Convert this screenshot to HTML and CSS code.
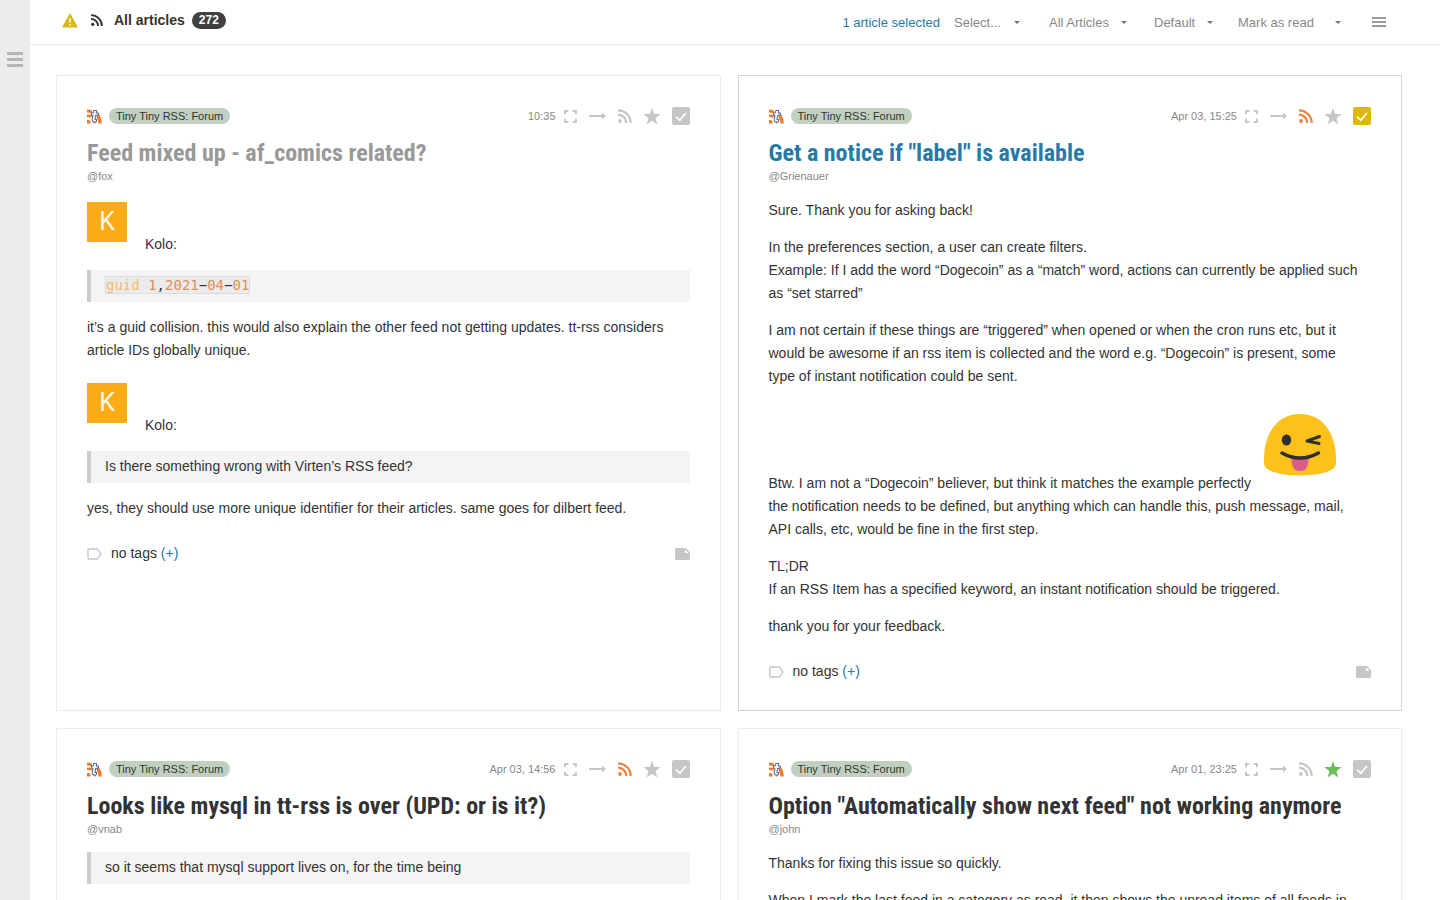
FILE: index.html
```html
<!DOCTYPE html>
<html lang="en">
<head>
<meta charset="utf-8">
<title>Tiny Tiny RSS</title>
<link rel="stylesheet" href="styles.css">
</head>
<body>
<svg class="defs" width="0" height="0" aria-hidden="true">
  <symbol id="rss" viewBox="0 0 14 14"><circle cx="2" cy="12" r="1.9"/><path d="M0 5.7A8.3 8.3 0 0 1 8.3 14M0 1.3A12.7 12.7 0 0 1 12.7 14" fill="none" stroke="currentColor" stroke-width="2.2"/></symbol>
  <symbol id="expand" viewBox="0 0 12 12"><path d="M1 4V1H4M8 1H11V4M11 8V11H8M4 11H1V8" fill="none" stroke="currentColor" stroke-width="1.8"/></symbol>
  <symbol id="arrow" viewBox="0 0 17 8"><path d="M0 3.1H13V0.4L17 4L13 7.6V4.9H0Z"/></symbol>
  <symbol id="star" viewBox="0 0 18 17"><path d="M9 0L11.1 6H17.5L12.5 10.2L14.4 16.6L9 12.8L3.6 16.6L5.5 10.2L0.5 6H6.9Z"/></symbol>
  <symbol id="label" viewBox="0 0 15 12"><path d="M2 1H9.6Q10.4 1 10.9 1.7L14 6L10.9 10.3Q10.4 11 9.6 11H2Q1 11 1 10V2Q1 1 2 1Z" fill="none" stroke="currentColor" stroke-width="1.4"/></symbol>
  <symbol id="note" viewBox="0 0 15 12"><path fill-rule="evenodd" d="M1.5 0H10.8L15 4.2V10.5Q15 12 13.5 12H1.5Q0 12 0 10.5V1.5Q0 0 1.5 0ZM9.8 1.2V5H13.8Z"/></symbol>
  <symbol id="favicon" viewBox="0 0 15 15"><path d="M0 0.5Q3 0.5 5 1.500V4.500Q3 3.500 0 3.500ZM0 5.500Q3 5.500 4.500 6.500V9Q3 8 0 8ZM0 11Q2 10.500 3.500 12V14.500H0ZM10.500 3.500Q14.800 8 14.800 14.500H11.500Q11.500 11 9.500 8.500ZM5.500 11.500H8.500V14.500H7Z" fill="#ee7b2d"/><path d="M6.800 1.500H9.800L9.200 4H11.500L11 6.300H8.600L7.900 10.500H9.800L9.300 13H7Q4.800 13 5.200 10.500L6 6.300H4L4.500 4H6.200Z" fill="#fff" stroke="#4a5d8c" stroke-width="1"/></symbol>
</svg>

<div class="app">
  <aside class="sidebar">
    <button class="burger" aria-label="Toggle sidebar"><i></i><i></i><i></i></button>
  </aside>
  <div class="main">
    <header class="toolbar">
      <div class="feed-name">
        <svg class="warn" viewBox="0 0 16 15"><path d="M8 0L16 14.5H0Z" fill="#dbb714"/><path d="M8 5.2V9.6M8 11V12.6" stroke="#fff" stroke-width="1.6"/></svg>
        <svg class="head-rss"><use href="#rss"/></svg>
        <span class="feed-title">All articles</span>
        <span class="badge">272</span>
      </div>
      <div class="actions">
        <a href="#" class="selected">1 article selected</a>
        <button class="menu menu-select">Select...<i class="caret"></i></button>
        <label class="menu menu-view"><select aria-label="View mode"><option>All Articles</option><option>Unread</option></select><i class="caret"></i></label>
        <label class="menu menu-order"><select aria-label="Sort order"><option>Default</option><option>Title</option></select><i class="caret"></i></label>
        <button class="menu menu-mark">Mark as read<i class="caret"></i></button>
        <button class="more" aria-label="Actions"><i></i><i></i><i></i></button>
      </div>
    </header>

    <main class="articles">
      <article class="card read">
        <div class="meta">
          <svg class="favicon"><use href="#favicon"/></svg>
          <a href="#" class="feed">Tiny Tiny RSS: Forum</a>
          <time>10:35</time>
          <svg class="expand"><use href="#expand"/></svg>
          <svg class="arrow"><use href="#arrow"/></svg>
          <svg class="rss"><use href="#rss"/></svg>
          <svg class="star"><use href="#star"/></svg>
          <input type="checkbox" aria-label="Select article">
        </div>
        <h2><a href="#">Feed mixed up - af_comics related?</a></h2>
        <div class="author">@fox</div>
        <div class="content">
          <div class="user"><span class="avatar">K</span>Kolo:</div>
          <blockquote><code><b class="kw">guid</b> <b class="num">1</b>,<b class="num">2021</b>−<b class="num">04</b>−<b class="num">01</b></code></blockquote>
          <p>it’s a guid collision. this would also explain the other feed not getting updates. tt-rss considers article IDs globally unique.</p>
          <div class="user"><span class="avatar">K</span>Kolo:</div>
          <blockquote>Is there something wrong with Virten’s RSS feed?</blockquote>
          <p>yes, they should use more unique identifier for their articles. same goes for dilbert feed.</p>
        </div>
        <footer><svg class="label"><use href="#label"/></svg><span>no tags <a href="#">(+)</a></span><svg class="note"><use href="#note"/></svg></footer>
      </article>

      <article class="card active">
        <div class="meta">
          <svg class="favicon"><use href="#favicon"/></svg>
          <a href="#" class="feed">Tiny Tiny RSS: Forum</a>
          <time>Apr 03, 15:25</time>
          <svg class="expand"><use href="#expand"/></svg>
          <svg class="arrow"><use href="#arrow"/></svg>
          <svg class="rss unread"><use href="#rss"/></svg>
          <svg class="star"><use href="#star"/></svg>
          <input type="checkbox" aria-label="Select article" checked>
        </div>
        <h2><a href="#">Get a notice if "label" is available</a></h2>
        <div class="author">@Grienauer</div>
        <div class="content">
          <p>Sure. Thank you for asking back!</p>
          <p>In the preferences section, a user can create filters.<br>Example: If I add the word “Dogecoin” as a “match” word, actions can currently be applied such as “set starred”</p>
          <p>I am not certain if these things are “triggered” when opened or when the cron runs etc, but it would be awesome if an rss item is collected and the word e.g. “Dogecoin” is present, some<br>type of instant notification could be sent.</p>
          <p>Btw. I am not a “Dogecoin” believer, but think it matches the example perfectly<svg class="emoji" viewBox="0 0 80 86" role="img" aria-label="winking face with tongue"><path d="M40 12C20 12 9 26 5 45C4 52 3.500 60 4.500 64C8 70 22 73.500 40 73.500S72 70 75.500 64C76.500 60 76 52 75 45C71 26 60 12 40 12Z" fill="#fcc21b"/><ellipse cx="26.500" cy="38" rx="4.700" ry="5.500" fill="#2f2f2f"/><path d="M59.500 34.500L47 39L59 41.500" fill="none" stroke="#2f2f2f" stroke-width="3" stroke-linecap="round" stroke-linejoin="round"/><path d="M31.500 55H48.500V59Q48 69 40 69T31.500 59Z" fill="#db5b8d"/><path d="M22 51Q40 61 58.500 51" fill="none" stroke="#2f2f2f" stroke-width="3.500" stroke-linecap="round"/></svg><br>the notification needs to be defined, but anything which can handle this, push message, mail,<br>API calls, etc, would be fine in the first step.</p>
          <p>TL;DR<br>If an RSS Item has a specified keyword, an instant notification should be triggered.</p>
          <p>thank you for your feedback.</p>
        </div>
        <footer><svg class="label"><use href="#label"/></svg><span>no tags <a href="#">(+)</a></span><svg class="note"><use href="#note"/></svg></footer>
      </article>

      <article class="card">
        <div class="meta">
          <svg class="favicon"><use href="#favicon"/></svg>
          <a href="#" class="feed">Tiny Tiny RSS: Forum</a>
          <time>Apr 03, 14:56</time>
          <svg class="expand"><use href="#expand"/></svg>
          <svg class="arrow"><use href="#arrow"/></svg>
          <svg class="rss unread"><use href="#rss"/></svg>
          <svg class="star"><use href="#star"/></svg>
          <input type="checkbox" aria-label="Select article">
        </div>
        <h2><a href="#">Looks like mysql in tt-rss is over (UPD: or is it?)</a></h2>
        <div class="author">@vnab</div>
        <div class="content">
          <blockquote>so it seems that mysql support lives on, for the time being</blockquote>
        </div>
      </article>

      <article class="card">
        <div class="meta">
          <svg class="favicon"><use href="#favicon"/></svg>
          <a href="#" class="feed">Tiny Tiny RSS: Forum</a>
          <time>Apr 01, 23:25</time>
          <svg class="expand"><use href="#expand"/></svg>
          <svg class="arrow"><use href="#arrow"/></svg>
          <svg class="rss"><use href="#rss"/></svg>
          <svg class="star starred"><use href="#star"/></svg>
          <input type="checkbox" aria-label="Select article">
        </div>
        <h2><a href="#">Option "Automatically show next feed" not working anymore</a></h2>
        <div class="author">@john</div>
        <div class="content">
          <p>Thanks for fixing this issue so quickly.</p>
          <p>When I mark the last feed in a category as read, it then shows the unread items of all feeds in</p>
        </div>
      </article>
    </main>
  </div>
</div>
</body>
</html>
```
FILE: styles.css
```css
* { box-sizing: border-box; }
body {
  margin: 0;
  font: 14px/23px "Liberation Sans", Arial, sans-serif;
  color: #333;
  background: #fff;
}
a { color: #257aa7; text-decoration: none; }
button { border: 0; padding: 0; background: none; font: inherit; color: inherit; }
svg { fill: currentColor; flex: none; }
.defs { position: absolute; }

.app { display: flex; height: 100vh; overflow: hidden; }
.sidebar { flex: none; width: 30px; background: #ececec; padding: 52px 7px; }
.burger { display: grid; gap: 3px; width: 16px; }
.burger i { height: 3px; background: #b5b5b5; }
.main { flex: 1; min-width: 0; display: flex; flex-direction: column; }

.toolbar {
  flex: none;
  display: flex;
  justify-content: space-between;
  height: 45px;
  padding: 0 54px 0 32px;
  border-bottom: 1px solid #ececec;
}
.feed-name { display: flex; align-items: center; height: 40px; }
.warn { width: 16px; height: 15px; margin-right: 13px; }
.head-rss { width: 12px; height: 12px; margin-right: 11px; }
.feed-title { font-weight: bold; margin-right: 7px; }
.badge {
  height: 17px;
  padding: 0 7px;
  border-radius: 9px;
  background: #404040;
  color: #fff;
  font-weight: bold;
  font-size: 12px;
  line-height: 17px;
}
.actions { display: flex; align-items: center; height: 44px; font-size: 13px; color: #888; }
.selected { margin-right: 14px; }
.menu { display: flex; align-items: center; justify-content: space-between; }
.menu select { appearance: none; border: 0; padding: 0; background: none; font: inherit; color: inherit; }
.menu-select { width: 66px; margin-right: 29px; }
.menu-view { width: 78px; margin-right: 27px; }
.menu-order { width: 59px; margin-right: 25px; }
.menu-mark { width: 103px; margin-right: 31px; }
.caret { border: 3px solid transparent; border-top-color: #777; border-bottom: 0; }
.more { display: grid; gap: 2px; width: 14px; }
.more i { height: 2px; background: #999; }

.articles {
  flex: 1;
  min-height: 0;
  overflow: hidden;
  display: grid;
  grid-template-columns: repeat(2, minmax(0, 1fr));
  grid-auto-rows: max-content;
  gap: 17px;
  padding: 30px 38px 0 26px;
}
.card {
  display: flex;
  flex-direction: column;
  border: 1px solid #ececec;
  padding: 30px 30px 27px;
}
.card.active { border-color: #d4d4d4; }
.meta { display: flex; align-items: center; height: 20px; color: #c6c6c6; }
.favicon { width: 15px; height: 15px; margin-right: 7px; }
.feed {
  height: 16px;
  padding: 0 7px;
  border-radius: 8px;
  background: #c0d0c0;
  color: #333;
  font-size: 11px;
  line-height: 16px;
}
time { margin: 0 8px 0 auto; font-size: 11px; color: #888; }
.expand { width: 13px; height: 13px; margin-right: 12px; }
.arrow { width: 17px; height: 8px; margin-right: 12px; }
.rss { width: 14px; height: 14px; margin-right: 11px; }
.star { width: 18px; height: 17px; margin-right: 11px; }
.rss.unread { color: #ee8243; }
.star.starred { color: #69be55; }
.meta input {
  appearance: none;
  display: grid;
  place-items: start center;
  width: 18px;
  height: 18px;
  margin: 0;
  padding-top: 5px;
  border-radius: 2px;
  background: #c6c6c6;
}
.meta input:checked { background: #dbb90a; }
.meta input::before {
  content: "";
  width: 10px;
  height: 5px;
  border: solid #fff;
  border-width: 0 0 2px 2px;
  transform: rotate(-50deg) scale(0.85);
}

h2 {
  margin: 11px 0 0;
  font: bold 24px/32px "Roboto Condensed", "Open Sans Condensed", "Liberation Sans", sans-serif;
}
h2 a { color: #333; }
.read h2 a { color: #999; }
.active h2 a { color: #257aa7; }
.author { font-size: 11px; line-height: 14px; color: #888; }
.content { margin-top: 16px; }
.content p { margin: 0 0 14px; }
.user { display: flex; align-items: flex-end; gap: 18px; margin: 3px 0 14px; }
p + .user { margin-top: 21px; }
.avatar {
  width: 40px;
  height: 40px;
  margin-bottom: 14px;
  background: #faab15;
  color: #fff8e8;
  font: 25px/40px Roboto, sans-serif;
  text-align: center;
}
blockquote {
  margin: 0 0 14px;
  padding: 4px 14px 5px;
  border-left: 4px solid #ccc;
  background: #f4f4f4;
}
code {
  border: 1px solid #ddd;
  background: #ebebeb;
  font: 14px/16px "DejaVu Sans Mono", monospace;
}
code b { font-weight: normal; }
.kw { color: #eebd6c; }
.num { color: #e08f56; }
.emoji { width: 80px; height: 86px; margin-left: 9px; }
footer { display: flex; align-items: center; margin-top: 8px; }
footer svg { width: 15px; height: 12px; color: #c6c6c6; }
.label { margin-right: 9px; }
.note { margin-left: auto; }
```
